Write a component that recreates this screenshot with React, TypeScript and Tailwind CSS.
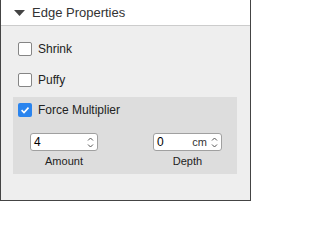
import React from "react";

function Box({ checked }: { checked?: boolean }) {
  if (checked) {
    return (
      <span className="w-[14px] h-[14px] rounded-[2px] bg-[#2a84ee] flex items-center justify-center shrink-0">
        <svg width="10" height="10" viewBox="0 0 10 10">
          <path d="M1.6 5.2 L4 7.5 L8.5 2.6" fill="none" stroke="#fff" strokeWidth="1.6" />
        </svg>
      </span>
    );
  }
  return <span className="w-[14px] h-[14px] rounded-[2px] border border-[#858585] bg-white shrink-0" />;
}

function Spin() {
  return (
    <svg width="7" height="13" viewBox="0 0 7 13" className="shrink-0">
      <path d="M1 4.5 L3.5 2 L6 4.5" fill="none" stroke="#555" strokeWidth="1" />
      <path d="M1 8.5 L3.5 11 L6 8.5" fill="none" stroke="#555" strokeWidth="1" />
    </svg>
  );
}

function NumField({ value, unit, width, label }: { value: string; unit?: string; width: string; label: string }) {
  return (
    <div className={`flex flex-col items-center ${width}`}>
      <div className="w-full h-[18px] bg-white border border-[#a0a0a0] rounded-[3px] flex items-center pl-[3px] pr-[3px] text-[12px] text-black">
        <span className="flex-1">{value}</span>
        {unit && <span className="mr-[4px] text-[11px] text-[#333]">{unit}</span>}
        <Spin />
      </div>
      <div className="mt-[2px] leading-[16px] text-[11px] text-[#222]">{label}</div>
    </div>
  );
}

export default function App() {
  return (
    <div
      className="w-[251px] h-[201px] bg-[#eeeeee] border-x border-b border-[#444] flex flex-col"
      style={{ fontFamily: '"Liberation Sans", Arial, sans-serif' }}
    >
      <div className="h-[26px] bg-white border-b border-[#cccccc] flex items-center pl-[13px]">
        <svg width="11" height="6" viewBox="0 0 11 6">
          <path d="M0 0 H11 L5.5 6 Z" fill="#444" />
        </svg>
        <span className="ml-[7px] text-[13px] text-[#333]">Edge Properties</span>
      </div>
      <div className="px-[12px] pt-[7px]">
        <div className="h-[31px] flex items-center gap-[6px] pl-[5px] text-[12px] text-[#222]">
          <Box />
          <span>Shrink</span>
        </div>
        <div className="h-[31px] flex items-center gap-[6px] pl-[5px] text-[12px] text-[#222]">
          <Box />
          <span>Puffy</span>
        </div>
        <div className="mt-[2px] w-[224px] bg-[#dddddd] pt-[6px] pb-[5px]">
          <div className="h-[14px] flex items-center gap-[6px] pl-[5px] text-[12px] text-[#222]">
            <Box checked />
            <span>Force Multiplier</span>
          </div>
          <div className="mt-[16px] flex pl-[17px] gap-[55px]">
            <NumField value="4" width="w-[68px]" label="Amount" />
            <NumField value="0" unit="cm" width="w-[69px]" label="Depth" />
          </div>
        </div>
      </div>
    </div>
  );
}
